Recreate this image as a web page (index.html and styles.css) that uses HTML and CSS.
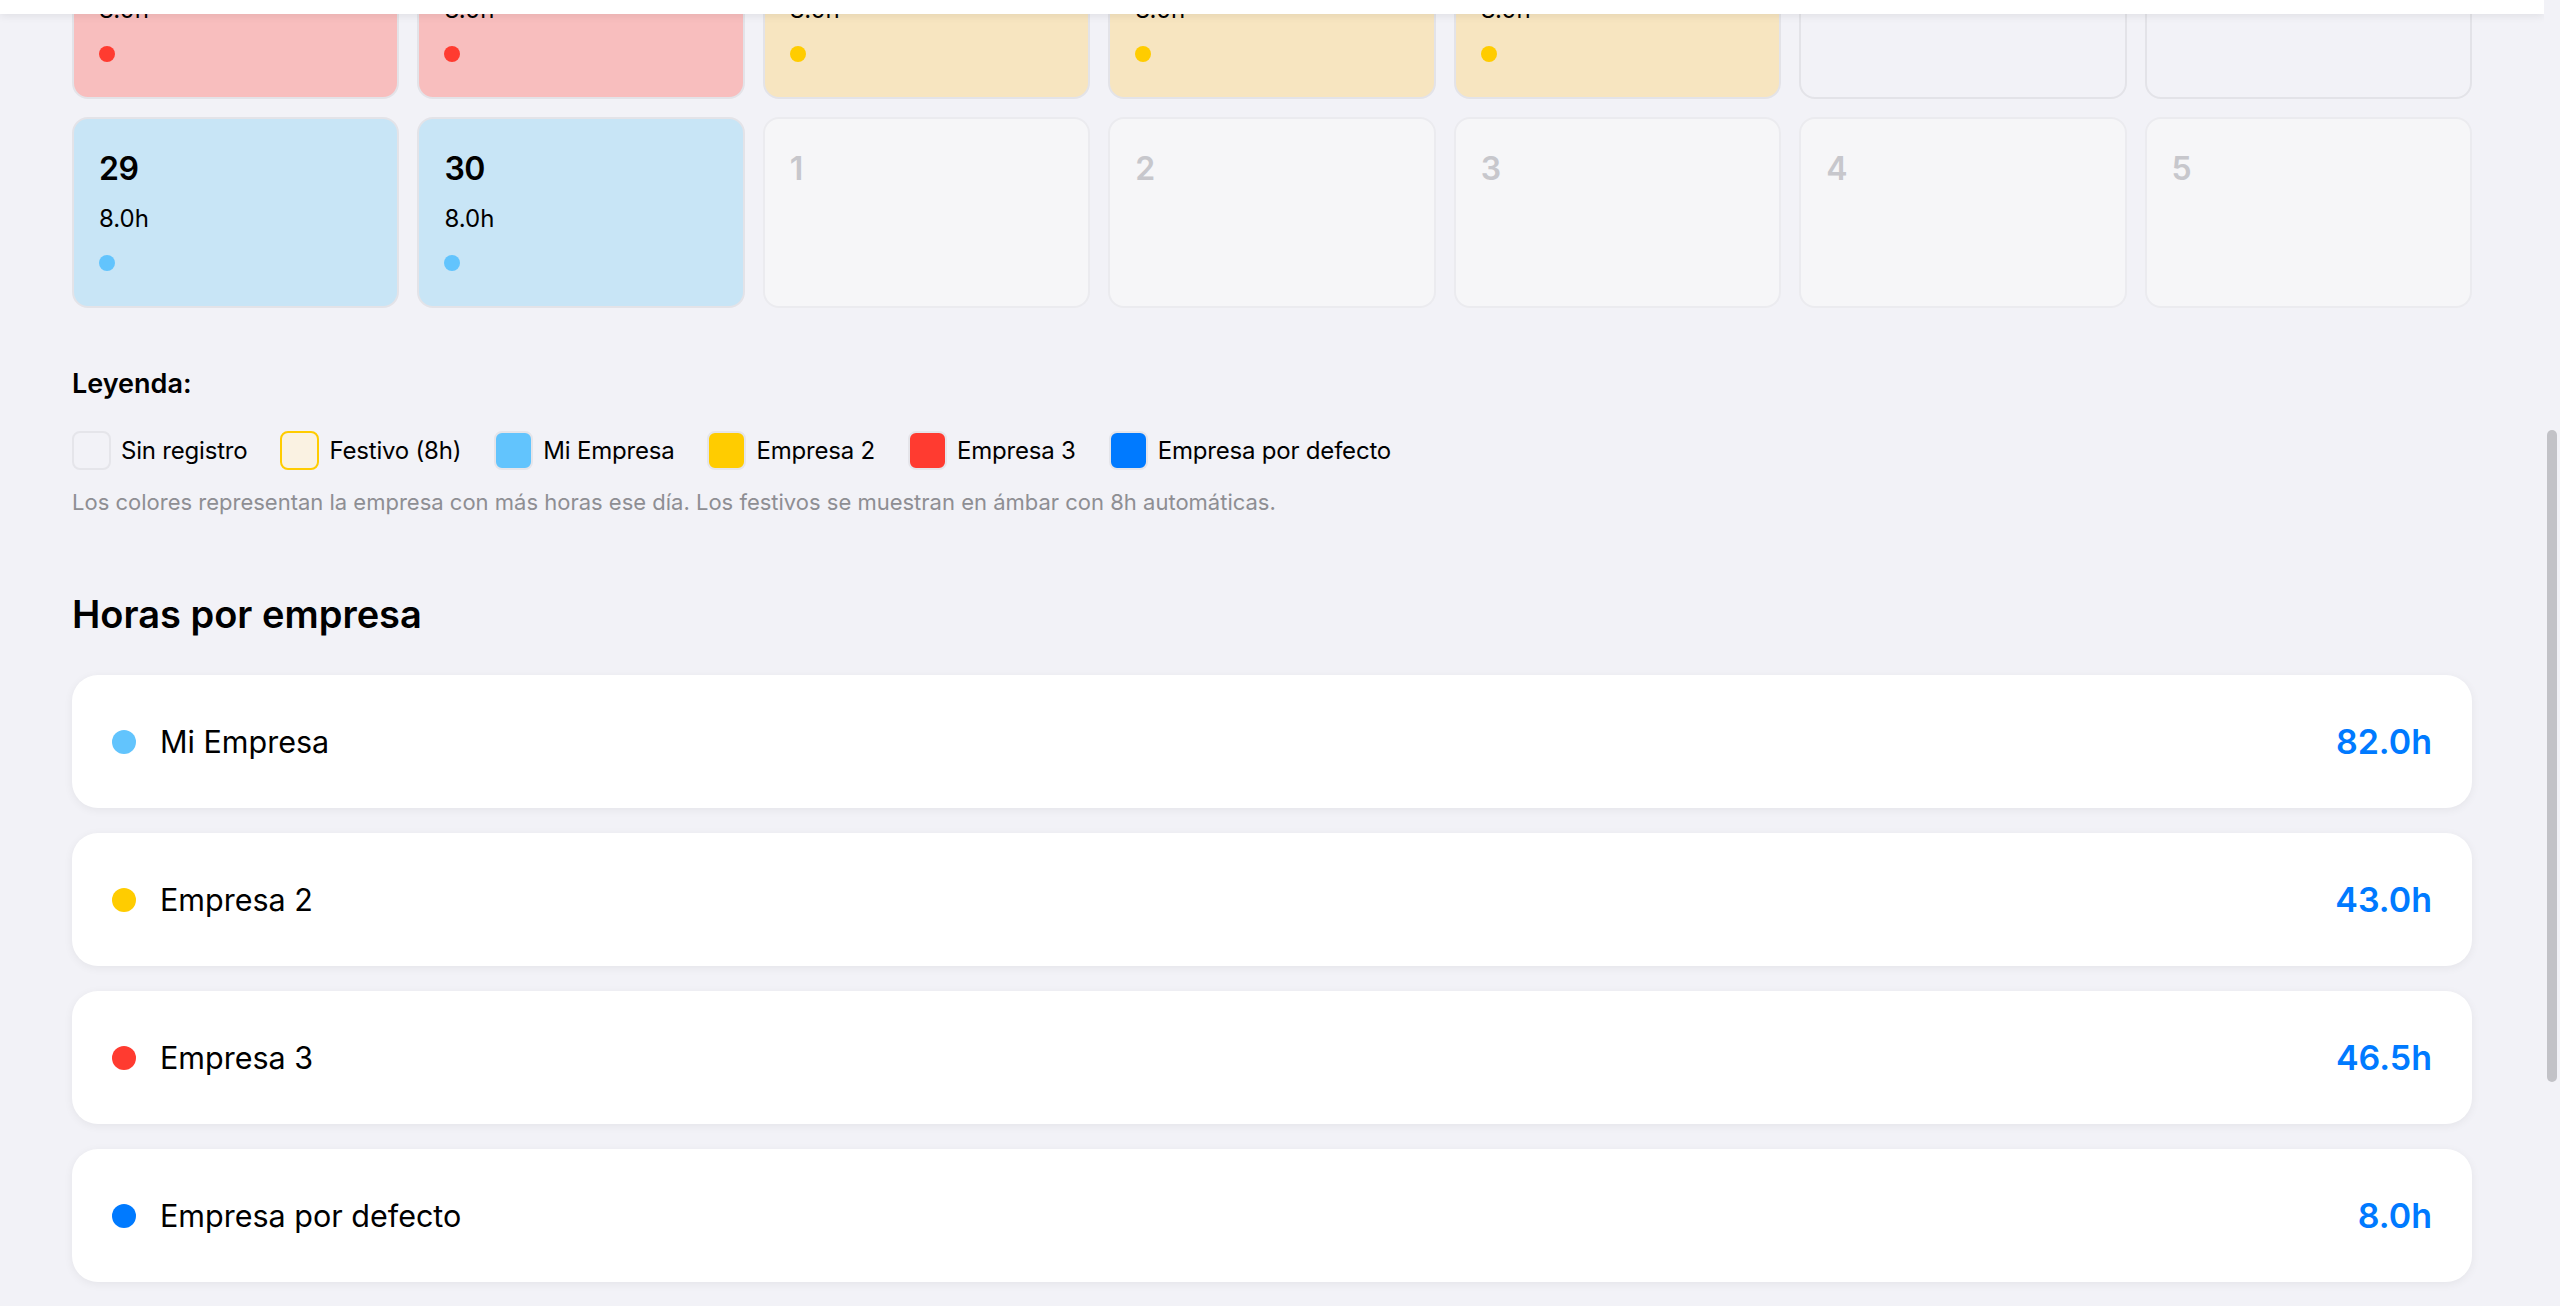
FILE: index.html
```html
<!DOCTYPE html>
<html lang="es">

<head>
  <meta charset="UTF-8">
  <meta name="viewport" content="width=device-width, initial-scale=1.0">
  <title>Calendario de horas</title>
  <link rel="stylesheet" href="styles.css">
</head>

<body>
  <div class="app">
    <div class="window">
      <header class="topbar"></header>

      <main class="content">
        <!-- calendario -->
        <section class="calendar">
          <div class="day red"><span class="num">22</span><span class="hours">8.0h</span><span class="dot red"></span></div>
          <div class="day red"><span class="num">23</span><span class="hours">8.0h</span><span class="dot red"></span></div>
          <div class="day amber"><span class="num">24</span><span class="hours">8.0h</span><span class="dot amber"></span></div>
          <div class="day amber"><span class="num">25</span><span class="hours">8.0h</span><span class="dot amber"></span></div>
          <div class="day amber"><span class="num">26</span><span class="hours">8.0h</span><span class="dot amber"></span></div>
          <div class="day empty"><span class="num">27</span></div>
          <div class="day empty"><span class="num">28</span></div>

          <div class="day blue"><span class="num">29</span><span class="hours">8.0h</span><span class="dot blue"></span></div>
          <div class="day blue"><span class="num">30</span><span class="hours">8.0h</span><span class="dot blue"></span></div>
          <div class="day other"><span class="num">1</span></div>
          <div class="day other"><span class="num">2</span></div>
          <div class="day other"><span class="num">3</span></div>
          <div class="day other"><span class="num">4</span></div>
          <div class="day other"><span class="num">5</span></div>
        </section>

        <!-- leyenda -->
        <section class="legend">
          <h3>Leyenda:</h3>
          <div class="legend-items">
            <div class="legend-item"><span class="swatch none"></span>Sin registro</div>
            <div class="legend-item"><span class="swatch holiday"></span>Festivo (8h)</div>
            <div class="legend-item"><span class="swatch blue"></span>Mi Empresa</div>
            <div class="legend-item"><span class="swatch amber"></span>Empresa 2</div>
            <div class="legend-item"><span class="swatch red"></span>Empresa 3</div>
            <div class="legend-item"><span class="swatch default"></span>Empresa por defecto</div>
          </div>
          <p class="note">Los colores representan la empresa con más horas ese día. Los festivos se muestran en ámbar con 8h automáticas.</p>
        </section>

        <!-- horas por empresa -->
        <section class="companies">
          <h2>Horas por empresa</h2>
          <div class="company"><span class="dot big blue"></span><span class="name">Mi Empresa</span><span class="total">82.0h</span></div>
          <div class="company"><span class="dot big amber"></span><span class="name">Empresa 2</span><span class="total">43.0h</span></div>
          <div class="company"><span class="dot big red"></span><span class="name">Empresa 3</span><span class="total">46.5h</span></div>
          <div class="company"><span class="dot big default"></span><span class="name">Empresa por defecto</span><span class="total">8.0h</span></div>
        </section>
      </main>
    </div>

    <div class="scrollbar">
      <div class="thumb"></div>
    </div>
  </div>
</body>

</html>
```

FILE: styles.css
```css
body {
  margin: 0;
  padding: 0;
  font-family: Inter, "Noto Sans", sans-serif;
  background-color: #f2f2f7;
  color: #000;
  overflow: hidden;
}

.app {
  display: flex;
  height: 100vh;
}

.window {
  flex: 1;
  display: flex;
  flex-direction: column;
  overflow: hidden;
}

.topbar {
  height: 14px;
  flex-shrink: 0;
  background-color: #fff;
  box-shadow: 0 2px 8px rgba(0, 0, 0, 0.08);
  position: relative;
  z-index: 1;
}

.content {
  flex: 1;
  padding: 0 72px;
}

/* calendario */
.calendar {
  display: grid;
  grid-template-columns: repeat(7, 1fr);
  gap: 18px;
  margin-top: -106px;
}

.day {
  height: 191px;
  box-sizing: border-box;
  border: 2px solid #e3e3e8;
  border-radius: 16px;
  padding: 31px 25px 0;
  display: flex;
  flex-direction: column;
  align-items: flex-start;
}

.day .num {
  font-size: 32px;
  line-height: 38px;
  font-weight: 600;
  letter-spacing: -0.5px;
}

.day .hours {
  font-size: 24px;
  line-height: 29px;
  margin-top: 16px;
}

.day .dot {
  margin-top: 22px;
}

.day.red {
  background-color: #f8bebe;
}

.day.amber {
  background-color: #f7e5c0;
}

.day.blue {
  background-color: #c8e5f6;
}

.day.empty {
  background-color: #f2f2f7;
}

.day.other {
  background-color: #f6f6f8;
  border-color: #ebebef;
}

.day.other .num {
  color: #c7c7cc;
}

.dot {
  display: block;
  width: 16px;
  height: 16px;
  border-radius: 50%;
  flex-shrink: 0;
}

.dot.big {
  width: 24px;
  height: 24px;
}

.dot.red,
.swatch.red {
  background-color: #ff3b30;
}

.dot.amber,
.swatch.amber {
  background-color: #ffcc00;
}

.dot.blue,
.swatch.blue {
  background-color: #62c4fd;
}

.dot.default,
.swatch.default {
  background-color: #007aff;
}

/* leyenda */
.legend {
  margin-top: 60px;
}

.legend h3 {
  margin: 0;
  font-size: 27px;
  line-height: 31px;
  font-weight: 600;
}

.legend-items {
  display: flex;
  align-items: center;
  gap: 33px;
  margin-top: 32px;
}

.legend-item {
  display: flex;
  align-items: center;
  gap: 10px;
  font-size: 24px;
  line-height: 29px;
  letter-spacing: -0.2px;
}

.swatch {
  width: 39px;
  height: 39px;
  box-sizing: border-box;
  border: 2px solid #e5e5ea;
  border-radius: 8px;
}

.swatch.none {
  background-color: #f2f2f7;
}

.swatch.holiday {
  background-color: #faf2e2;
  border-color: #ffcc00;
}

.note {
  margin: 20px 0 0;
  font-size: 22px;
  line-height: 25px;
  color: #8e8e93;
}

/* horas por empresa */
.companies {
  margin-top: 76px;
  display: flex;
  flex-direction: column;
  gap: 25px;
}

.companies h2 {
  margin: 0 0 13px;
  font-size: 38px;
  line-height: 46px;
  font-weight: 600;
}

.company {
  height: 133px;
  flex-shrink: 0;
  box-sizing: border-box;
  padding: 0 40px;
  background-color: #fff;
  border-radius: 26px;
  box-shadow: 0 2px 10px rgba(0, 0, 0, 0.06);
  display: flex;
  align-items: center;
  gap: 24px;
}

.company .name {
  flex: 1;
  font-size: 30.5px;
}

.company .total {
  font-size: 34px;
  font-weight: 600;
  color: #007aff;
}

/* barra de desplazamiento */
.scrollbar {
  width: 16px;
  flex-shrink: 0;
  background-color: #f2f2f7;
  padding-top: 430px;
  box-sizing: border-box;
}

.thumb {
  width: 10px;
  height: 652px;
  margin-left: 3px;
  border-radius: 5px;
  background-color: #c2c2c7;
}
```
